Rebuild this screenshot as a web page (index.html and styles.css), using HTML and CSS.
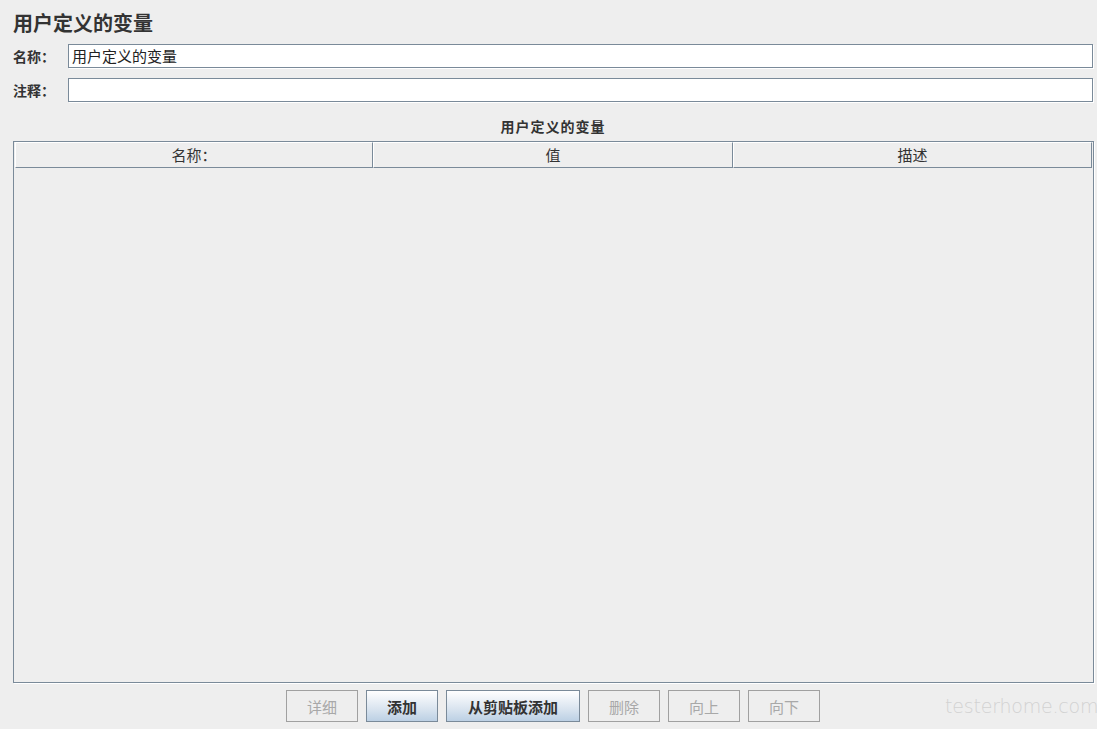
FILE: index.html
```html
<!DOCTYPE html>
<html lang="zh-CN">
<head>
    <meta charset="UTF-8">
    <title>用户定义的变量</title>
    <link rel="stylesheet" href="styles.css">
</head>
<body>
    <div class="panel">
        <h1 class="title">用户定义的变量</h1>
        <div class="field">
            <label class="field-label">名称：</label>
            <div class="field-input">用户定义的变量</div>
        </div>
        <div class="field">
            <label class="field-label">注释：</label>
            <div class="field-input"></div>
        </div>
        <div class="table-title">用户定义的变量</div>
        <div class="table">
            <div class="table-head">
                <div class="th">名称：</div>
                <div class="th">值</div>
                <div class="th">描述</div>
            </div>
        </div>
        <div class="buttons">
            <button class="btn" disabled>详细</button>
            <button class="btn primary">添加</button>
            <button class="btn primary wide">从剪贴板添加</button>
            <button class="btn" disabled>删除</button>
            <button class="btn" disabled>向上</button>
            <button class="btn" disabled>向下</button>
        </div>
    </div>
    <div class="watermark">testerhome.com</div>
</body>
</html>
```

FILE: styles.css
```css
body {
    margin: 0;
    background: #eeeeee;
    color: #333;
    font-family: "Noto Sans CJK SC", "Noto Sans", sans-serif;
    width: 1097px;
    height: 729px;
    overflow: hidden;
    position: relative;
}
.panel {
    padding: 9px 4px 0 13px;
    display: flex;
    flex-direction: column;
}
.title {
    margin: 0 0 7px 0;
    font-size: 20px;
    line-height: 28px;
    font-weight: bold;
    color: #333;
}
.field {
    display: flex;
    align-items: center;
    height: 24px;
    margin-bottom: 10px;
}
.field-label {
    width: 55px;
    font-size: 14px;
    font-weight: bold;
}
.field-input {
    flex: 1;
    height: 22px;
    background: #fff;
    border: 1px solid #7a8a99;
    box-shadow: 1px 1px 0 #fff;
    font-size: 15px;
    line-height: 22px;
    padding-left: 3px;
    color: #222;
}
.table-title {
    text-align: center;
    font-size: 14px;
    letter-spacing: 1px;
    font-weight: bold;
    height: 29px;
    line-height: 28px;
    width: 1080px;
}
.table {
    width: 1078px;
    height: 540px;
    border: 1px solid #7a8a99;
    box-shadow: 1px 1px 0 #fff;
    padding-left: 1px;
    box-sizing: content-box;
}
.table-head {
    display: grid;
    grid-template-columns: 358px 360px 359px;
    height: 26px;
}
.th {
    border-top: 1px solid #fff;
    border-left: 1px solid #fff;
    border-right: 1px solid #7a8a99;
    border-bottom: 1px solid #7a8a99;
    text-align: center;
    font-size: 15px;
    line-height: 24px;
    color: #333;
}
.buttons {
    width: 1080px;
    display: flex;
    justify-content: center;
    gap: 8px;
    margin-top: 7px;
}
.btn {
    width: 72px;
    height: 32px;
    font-family: "Noto Sans CJK SC", sans-serif;
    font-size: 15px;
    font-weight: bold;
    border: 1px solid #7a8a99;
    background: linear-gradient(#ffffff, #d9e4ef 60%, #bcd0e4);
    color: #333;
    padding: 0;
}
.btn.wide {
    width: 134px;
}
.btn:disabled {
    background: #eeeeee;
    border-color: #a0a0a0;
    color: #a8a8a8;
    font-weight: normal;
}
.watermark {
    position: absolute;
    left: 945px;
    top: 695px;
    font-family: "DejaVu Sans", sans-serif;
    font-weight: 200;
    font-size: 19px;
    letter-spacing: -0.2px;
    color: #d2d2d2;
}
```
